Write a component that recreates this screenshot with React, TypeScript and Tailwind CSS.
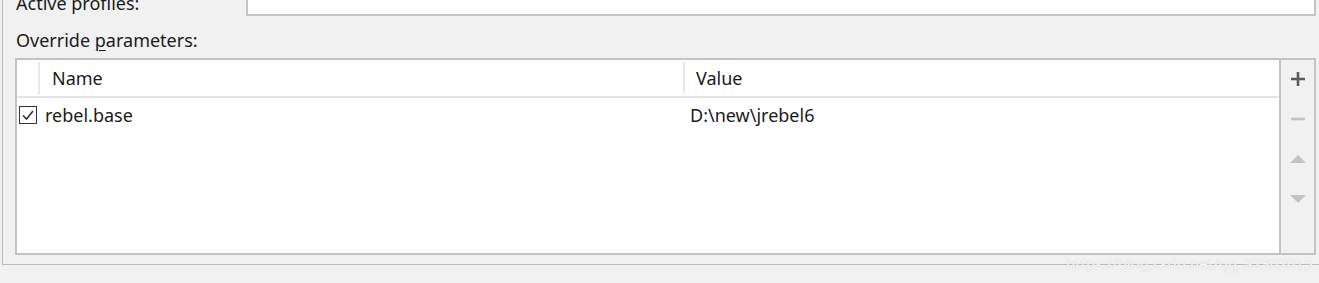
import React from 'react';

const rows = [{ name: 'rebel.base', value: 'D:\\new\\jrebel6', checked: true }];

const App: React.FC = () => {
  return (
    <div className="w-[1319px] h-[283px] bg-[#f1f1f1] overflow-hidden text-[#1a1a1a]" style={{ fontFamily: '"Noto Sans", "Open Sans", sans-serif' }}>
      {/* Panel */}
      <div className="ml-[2px] h-[265px] border-l border-b border-[#bdbdbd] flex flex-col">
        {/* Active profiles row (cut off at top) */}
        <div className="flex h-[16px] items-end">
          <div className="w-[243px] h-full overflow-hidden relative">
            <span className="absolute left-[13px] bottom-[1px] text-[18px] leading-[24px] whitespace-nowrap">Active profiles:</span>
          </div>
          <div className="flex-1 mr-[3px] h-full bg-white border-l-2 border-r-2 border-b-2 border-[#c3c3c3]" />
        </div>

        <div className="pl-[13px] pt-[11px] h-[42px] text-[18px] leading-[26px]">
          Override <span className="underline underline-offset-[3px] decoration-1">p</span>arameters:
        </div>

        {/* Table + toolbar */}
        <div className="flex ml-[12px] mr-[3px] h-[197px] border-2 border-[#c3c3c3]">
          <div className="flex-1 bg-white flex flex-col">
            <div className="flex h-[38px] border-b-2 border-[#e4e4e4] text-[18px]">
              <div className="w-[23px] flex items-center justify-end">
                <div className="w-[2px] h-[32px] bg-[#e8e8e8]" />
              </div>
              <div className="w-[643px] pl-[12px] flex items-center">Name</div>
              <div className="flex items-center">
                <div className="w-[2px] h-[32px] bg-[#e8e8e8]" />
                <span className="pl-[11px]">Value</span>
              </div>
            </div>
            {rows.map((r) => (
              <div key={r.name} className="flex h-[34px] items-center text-[18px]">
                <div className="w-[28px] pl-[2px] flex items-center">
                  <div className="w-[18px] h-[18px] border border-[#333] bg-white flex items-center justify-center">
                    {r.checked && (
                      <svg width="14" height="14" viewBox="0 0 14 14">
                        <path d="M2 7.5 L5.5 11 L12 3" fill="none" stroke="#333" strokeWidth="1.6" />
                      </svg>
                    )}
                  </div>
                </div>
                <div className="w-[645px]">{r.name}</div>
                <div>{r.value}</div>
              </div>
            ))}
          </div>
          <div className="w-[35px] border-l-2 border-[#c3c3c3] bg-[#f1f1f1] flex flex-col items-center pt-[10px] gap-[22px]">
            <svg width="18" height="18" viewBox="0 0 18 18">
              <path d="M9 2 V16 M2 9 H16" stroke="#5a5a5a" strokeWidth="2.6" />
            </svg>
            <svg width="18" height="18" viewBox="0 0 18 18">
              <path d="M2 9 H16" stroke="#c3c3c3" strokeWidth="2.6" />
            </svg>
            <svg width="18" height="18" viewBox="0 0 18 18">
              <path d="M1 13 L9 5 L17 13 Z" fill="#c3c3c3" />
            </svg>
            <svg width="18" height="18" viewBox="0 0 18 18">
              <path d="M1 5 L9 13 L17 5 Z" fill="#c3c3c3" />
            </svg>
          </div>
        </div>
      </div>
      <div className="relative">
        <span className="absolute left-[1066px] top-[-11px] text-[15px] leading-[18px] whitespace-nowrap text-[#f8f8f8]" style={{ textShadow: '0 0 1px #bbb' }}>
          https://blog.csdn.net/qq_32302015
        </span>
      </div>
    </div>
  );
};

export default App;
